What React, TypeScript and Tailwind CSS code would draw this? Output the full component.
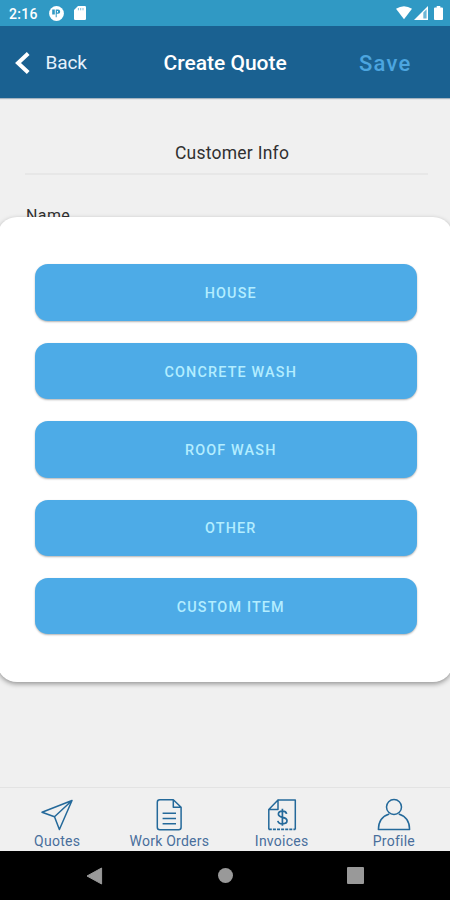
import React from "react";

const services = ["HOUSE", "CONCRETE WASH", "ROOF WASH", "OTHER", "CUSTOM ITEM"];

function StatusBar() {
  return (
    <div className="flex h-[26px] shrink-0 items-center bg-[#3099c4] text-white">
      <span className="ml-[9px] w-[40px] pt-px text-[14px] leading-[26px] font-medium tracking-[0.3px]">2:16</span>
      <svg width="15" height="15" viewBox="0 0 15 15">
        <circle cx="7.5" cy="7.5" r="7.4" fill="#fff" />
        <path d="M3.2 3.6h2.6v5H3.2zM7.2 3.6h1.9a2.1 2.1 0 0 1 0 4.2H7.7v3.4h-1V3.6z" fill="#3099c4" />
        <path d="M8 5h1v1.4H8z" fill="#fff" />
      </svg>
      <svg className="ml-[9.5px]" width="12" height="14" viewBox="0 0 12 14">
        <path d="M4 0h6.8q1.2 0 1.2 1.2v11.6q0 1.2-1.2 1.2H1.2Q0 14 0 12.8V4z" fill="#fff" />
        <path d="M4.4 2v2.3M6.7 2v2.3M9 2v2.3" stroke="#3099c4" strokeWidth="1" opacity=".6" />
      </svg>
      <svg className="ml-auto" width="16" height="14" viewBox="0 0 16 14">
        <path d="M0 2.8Q8-2.3 16 2.8L8 13.2z" fill="#fff" />
      </svg>
      <svg className="ml-[2px]" width="14" height="14" viewBox="0 0 14 14">
        <path d="M0 14 14 0v14z" fill="#fff" />
        <path d="M9.3 6.6 12.6 3.3v9.3H9.3z" fill="#3099c4" opacity=".7" />
      </svg>
      <svg className="mr-[7px] ml-[6px]" width="9" height="14" viewBox="0 0 9 14">
        <path d="M2.7 0h3.6v1.4H8q1 0 1 1V13q0 1-1 1H1q-1 0-1-1V2.4q0-1 1-1h1.7z" fill="#fff" />
      </svg>
    </div>
  );
}

function Header() {
  return (
    <header className="flex h-[72px] shrink-0 items-center bg-[#1a6191] pt-px text-white shadow-[0_1px_1px_#a5b4c0]">
      <svg className="ml-[15px]" width="15" height="22" viewBox="0 0 15 22">
        <path d="M13.2 1.5 3 11l10.2 9.5" fill="none" stroke="#fff" strokeWidth="4" />
      </svg>
      <span className="ml-[15.5px] w-[118px] pt-px text-[19px] tracking-[-0.1px] text-[#e6f1fc]">Back</span>
      <h1 className="w-[195.5px] pt-[2px] text-[21px] font-medium whitespace-nowrap">Create Quote</h1>
      <span className="pt-[2px] text-[22px] font-medium tracking-[1.2px] text-[#4ca5df]">Save</span>
    </header>
  );
}

const iconProps = {
  width: 34,
  height: 34,
  viewBox: "0 0 34 34",
  fill: "none",
  stroke: "#24699a",
  strokeWidth: 1.5,
  strokeLinejoin: "round" as const,
};

const tabs = [
  {
    label: "Quotes",
    icon: (
      <svg {...iconProps}>
        <path d="M32 2.5 2 14.2l12.5 4.6L19.4 31.5z M32 2.5 14.5 18.8" />
      </svg>
    ),
  },
  {
    label: "Work Orders",
    icon: (
      <svg {...iconProps}>
        <path d="M21.3 1.7H7.8q-2.5 0-2.5 2.5v25.1q0 2.5 2.5 2.5h18.8q2.5 0 2.5-2.5V9.2zM21.3 1.7v7.5h7.8M10.6 15.2H24M10.6 20.5H24M10.6 25.8H24" />
      </svg>
    ),
  },
  {
    label: "Invoices",
    icon: (
      <svg {...iconProps}>
        <path d="M13 1.9h17.3v29.5M3.8 31.4V11.4L13 1.9v9.5H3.8" />
        <path d="M3.8 31.4h26.5" strokeWidth="1.8" strokeDasharray="3 1.1" />
        <path d="M21.6 15.8q-.5-2.7-4.2-2.7-4 0-4 3 0 2.4 4.1 3.2 4.5.8 4.5 3.5 0 3-4.4 3-4.2 0-4.8-3M17.4 10.8v17" strokeWidth="1.7" />
      </svg>
    ),
  },
  {
    label: "Profile",
    icon: (
      <svg {...iconProps}>
        <circle cx="17" cy="9" r="7.5" />
        <path d="M12.3 16Q1.4 19.3 1.4 31.6h31.2Q32.6 19.3 21.7 16" />
      </svg>
    ),
  },
];

function TabBar() {
  return (
    <nav className="grid h-[64px] shrink-0 grid-cols-4 border-t border-[#e3e3e3] bg-[#f0f0f0] pl-px">
      {tabs.map((tab) => (
        <div key={tab.label} className="flex flex-col items-center pt-[10px] text-[14px] leading-[19px] tracking-[0.25px] text-[#486e9c]">
          {tab.icon}
          <span className="whitespace-nowrap">{tab.label}</span>
        </div>
      ))}
    </nav>
  );
}

function SystemBar() {
  return (
    <div className="flex h-[49px] shrink-0 items-center bg-black pl-[86px]">
      <svg width="17" height="18" viewBox="0 0 17 18">
        <path d="M1 9 15.6 1v16z" fill="#999" stroke="#999" strokeLinejoin="round" />
      </svg>
      <div className="ml-[115px] h-[15px] w-[15px] rounded-full bg-[#999]" />
      <div className="ml-[114px] h-[17px] w-[17px] rounded-[1px] bg-[#999]" />
    </div>
  );
}

export default function App() {
  return (
    <div className="relative flex h-[900px] w-[450px] flex-col overflow-hidden bg-[#f0f0f0] font-[Roboto,sans-serif]">
      <StatusBar />
      <Header />
      <main className="flex-1 pr-[22px] pl-[25px]">
        <h2 className="border-b-2 border-[#e7e7e7] pt-[43px] pb-[8px] pl-[11px] text-center text-[17.5px] leading-[24px] tracking-[0.25px] text-[#303030]">
          Customer Info
        </h2>
        <p className="mt-[31px] pl-[1px] text-[16px] leading-[20px] tracking-[0.4px] text-[#303030]">Name</p>
      </main>
      <TabBar />
      <SystemBar />
      <section className="absolute top-[217px] -right-[3px] -left-[3px] flex h-[465px] flex-col gap-[22px] rounded-[20px] bg-white pt-[47.4px] pr-[36px] pl-[37.5px] shadow-[0_2px_5px_rgba(0,0,0,0.38)]">
        {services.map((service) => (
          <button
            key={service}
            className="h-[56.4px] shrink-0 rounded-[13px] bg-[#4dabe7] pt-[3px] pl-[10px] text-[14.4px] font-medium tracking-[1.15px] text-[#b3edff] shadow-[0_1px_2px_rgba(0,0,0,0.3)]"
          >
            {service}
          </button>
        ))}
      </section>
    </div>
  );
}
